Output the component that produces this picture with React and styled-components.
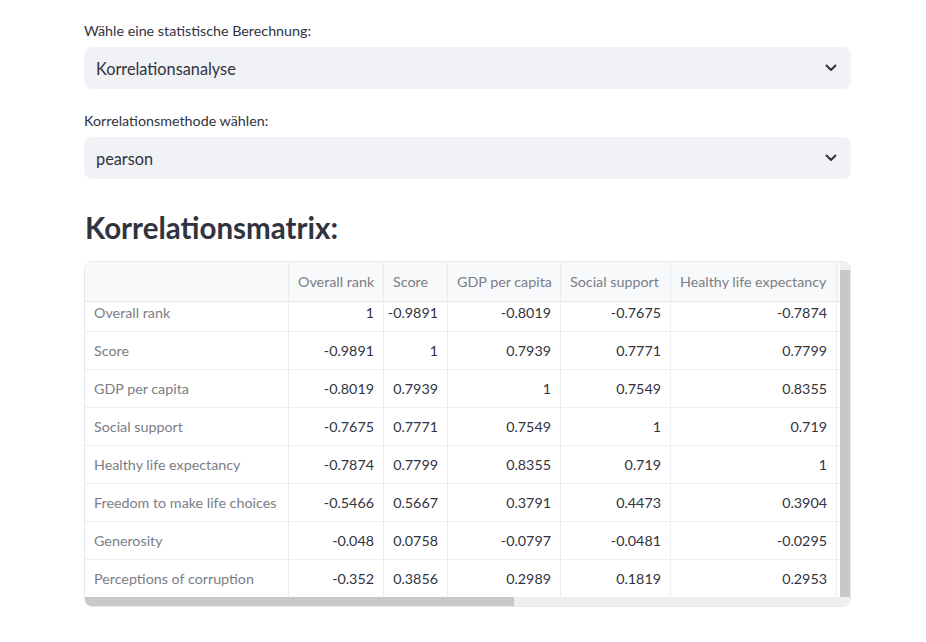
import React from "react";
import styled, { createGlobalStyle } from "styled-components";

const Global = createGlobalStyle`
  html, body { margin: 0; padding: 0; background: #ffffff; }
  body { font-family: Lato, "Noto Sans", sans-serif; color: #31333f; }
`;

const Page = styled.main`
  width: 767px;
  padding: 20px 0 0 84px;
  display: flex;
  flex-direction: column;
`;

const Label = styled.label`
  display: block;
  font-size: 14.3px;
  line-height: 21px;
  height: 21px;
  margin-bottom: 6px;
  color: #31333f;
`;

const Select = styled.div`
  height: 42px;
  box-sizing: border-box;
  background: #f0f2f6;
  border-radius: 8px;
  display: flex;
  align-items: center;
  justify-content: space-between;
  padding: 0 14px 0 12px;
  font-size: 16.3px;
  color: #31333f;
  margin-bottom: ${(p) => p.$mb || 0}px;
`;

const Heading = styled.h2`
  margin: 0 0 16px 0;
  font-size: 29.5px;
  line-height: 35px;
  font-weight: 700;
  color: #31333f;
  padding-left: 1px;
`;

const Frame = styled.div`
  box-sizing: border-box;
  border: 1px solid #e6e8ee;
  border-radius: 8px;
  overflow: hidden;
  display: grid;
  grid-template-columns: 1fr 10px;
  grid-template-rows: 1fr 9px;
  height: 346px;
`;

const Viewport = styled.div`
  overflow: hidden;
`;

const Grid = styled.div`
  display: grid;
  grid-template-columns: 204px 95px 64px 113px 110px 166px 40px;
  font-size: 14.3px;
`;

const HeadCell = styled.div`
  height: 40px;
  box-sizing: border-box;
  background: #f8f9fb;
  border-right: 1px solid #e9ebef;
  border-bottom: 1px solid #e4e6eb;
  color: #7b7d86;
  display: flex;
  align-items: center;
  padding: 0 9px;
  white-space: nowrap;
  overflow: hidden;
`;

const Cell = styled.div`
  height: ${(p) => (p.$first ? 30 : 38)}px;
  box-sizing: border-box;
  border-right: 1px solid #eceef1;
  border-bottom: 1px solid #eceef1;
  display: flex;
  align-items: center;
  justify-content: ${(p) => (p.$index ? "flex-start" : "flex-end")};
  padding: 0 9px ${(p) => (p.$first ? 8 : 0)}px 9px;
  color: ${(p) => (p.$index ? "#7b7d86" : "#31333f")};
  white-space: nowrap;
  overflow: hidden;
`;

const VTrack = styled.div`
  background: #f1f1f1;
  display: flex;
  flex-direction: column;
  padding-top: 8px;
`;

const VThumb = styled.div`
  background: #c8c8c8;
  height: 327px;
`;

const HTrack = styled.div`
  background: #efefef;
  display: flex;
`;

const HThumb = styled.div`
  background: #c8c8c8;
  width: 429px;
`;

const Corner = styled.div`
  background: #efefef;
`;

const Chevron = () => (
  <svg width="12" height="8" viewBox="0 0 12 8" fill="none">
    <path d="M1.5 1.5 L6 6 L10.5 1.5" stroke="#31333f" strokeWidth="2" strokeLinecap="round" strokeLinejoin="round" />
  </svg>
);

const cols = ["Overall rank", "Score", "GDP per capita", "Social support", "Healthy life expectancy", ""];

const rows = [
  ["Overall rank", "1", "-0.9891", "-0.8019", "-0.7675", "-0.7874", ""],
  ["Score", "-0.9891", "1", "0.7939", "0.7771", "0.7799", ""],
  ["GDP per capita", "-0.8019", "0.7939", "1", "0.7549", "0.8355", ""],
  ["Social support", "-0.7675", "0.7771", "0.7549", "1", "0.719", ""],
  ["Healthy life expectancy", "-0.7874", "0.7799", "0.8355", "0.719", "1", ""],
  ["Freedom to make life choices", "-0.5466", "0.5667", "0.3791", "0.4473", "0.3904", ""],
  ["Generosity", "-0.048", "0.0758", "-0.0797", "-0.0481", "-0.0295", ""],
  ["Perceptions of corruption", "-0.352", "0.3856", "0.2989", "0.1819", "0.2953", ""],
];

export default function App() {
  return (
    <>
      <Global />
      <Page>
        <Label>Wähle eine statistische Berechnung:</Label>
        <Select $mb={21}>
          <span>Korrelationsanalyse</span>
          <Chevron />
        </Select>
        <Label>Korrelationsmethode wählen:</Label>
        <Select $mb={31}>
          <span>pearson</span>
          <Chevron />
        </Select>
        <Heading>Korrelationsmatrix:</Heading>
        <Frame>
          <Viewport>
            <Grid>
              <HeadCell />
              {cols.map((c, i) => (
                <HeadCell key={i}>{c}</HeadCell>
              ))}
              {rows.map((r, ri) =>
                r.map((v, ci) => (
                  <Cell key={ri + "-" + ci} $index={ci === 0} $first={ri === 0}>
                    {v}
                  </Cell>
                ))
              )}
            </Grid>
          </Viewport>
          <VTrack>
            <VThumb />
          </VTrack>
          <HTrack>
            <HThumb />
          </HTrack>
          <Corner />
        </Frame>
      </Page>
    </>
  );
}
